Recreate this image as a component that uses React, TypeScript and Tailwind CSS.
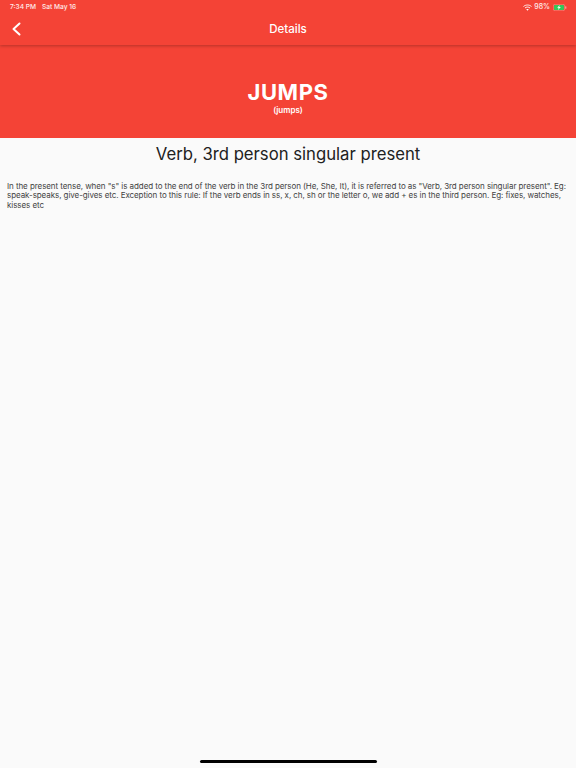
import React from 'react';

const StatusBar = () => (
    <div className="flex h-[14px] items-center justify-between pt-[1px] pl-[10px] pr-[9px] text-[6.600px] font-medium text-white/90">
        <div className="flex gap-[6px]">
            <span>7:34 PM</span>
            <span>Sat May 16</span>
        </div>
        <div className="flex items-center gap-[2px]">
            <svg width="9" height="7" viewBox="0 0 18 14" fill="none" stroke="white" strokeOpacity="0.9">
                <path d="M1 5c4.500-4 11.500-4 16 0" strokeWidth="2" />
                <path d="M4 8c2.800-2.500 7.200-2.500 10 0" strokeWidth="2" />
                <path d="M9 13.500 6.500 10.500c1.500-1 3.500-1 5 0z" fill="white" stroke="none" />
            </svg>
            <span className="text-[7px]">98%</span>
            <svg width="14" height="7" viewBox="0 0 14 7" className="ml-[1px]">
                <rect x="0.25" y="0.25" width="11.5" height="6.500" rx="1.800" fill="none" stroke="white" strokeOpacity="0.5" strokeWidth="0.5" />
                <rect x="1" y="1" width="10" height="5" rx="1.200" fill="#34c759" />
                <path d="M6.800 1 4.200 3.800h1.500L5 6l2.800-3H6.200z" fill="white" />
                <rect x="12.300" y="2.300" width="1" height="2.400" rx="0.500" fill="white" fillOpacity="0.6" />
            </svg>
        </div>
    </div>
);

const App = () => {
    return (
        <div className="relative flex min-h-[768px] flex-col overflow-hidden bg-[#fafafa] font-['Inter',sans-serif]">
            <header className="relative z-10 h-[45px] bg-[#f44336] shadow-[0_1px_3px_rgba(0,0,0,0.25)]">
                <StatusBar />
                <div className="relative flex h-[31px] items-center justify-center">
                    <button className="absolute left-[10px] top-[8px] text-white" aria-label="Back">
                        <svg width="12" height="14" viewBox="0 0 12 14" fill="none" stroke="white" strokeWidth="2">
                            <path d="M9.500 1.500 3.500 7l6 5.500" strokeLinecap="round" strokeLinejoin="round" />
                        </svg>
                    </button>
                    <h1 className="text-[11.500px] font-medium text-white">Details</h1>
                </div>
            </header>

            <section className="flex h-[93px] flex-col items-center bg-[#f44336] pt-[34px] text-white">
                <h2 className="text-[22px] leading-[26px] font-bold tracking-[0.6px]">JUMPS</h2>
                <p className="text-[8px] leading-[10px] font-semibold">(jumps)</p>
            </section>

            <main className="flex-1 px-[7px]">
                <h3 className="pt-[5px] text-center text-[16.700px] leading-[23px] font-normal text-[#212121]">
                    Verb, 3rd person singular present
                </h3>
                <p className="mt-[15.500px] text-[8px] leading-[9.600px] tracking-[-0.07px] text-[#424242]">
                    In the present tense, when "s" is added to the end of the verb in the 3rd person (He, She, It), it is referred to as "Verb, 3rd person singular present". Eg: speak-speaks, give-gives etc. Exception to this rule: If the verb ends in ss, x, ch, sh or the letter o, we add + es in the third person. Eg: fixes, watches, kisses etc
                </p>
            </main>

            <div className="absolute bottom-[5px] left-[200px] h-[3px] w-[177px] rounded-full bg-black" />
        </div>
    );
};

export default App;
